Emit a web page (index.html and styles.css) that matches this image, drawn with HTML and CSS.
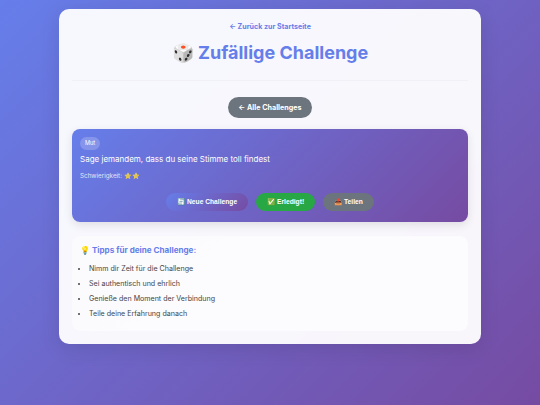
FILE: index.html
```html
<!DOCTYPE html>
<html lang="de">
<head>
<meta charset="utf-8">
<title>Zufällige Challenge</title>
<link rel="stylesheet" href="styles.css">
</head>
<body>
<main class="container">
  <header class="header">
    <a class="back-link" href="#">← Zurück zur Startseite</a>
    <h1 class="title">🎲 Zufällige Challenge</h1>
  </header>
  <div class="all-row"><a class="all-btn" href="#">← Alle Challenges</a></div>
  <section class="card">
    <span class="tag">Mut</span>
    <p class="text">Sage jemandem, dass du seine Stimme toll findest</p>
    <p class="level">Schwierigkeit: ⭐⭐</p>
    <div class="actions">
      <button class="btn btn-new">🔄 Neue Challenge</button>
      <button class="btn btn-done">✅ Erledigt!</button>
      <button class="btn btn-share">📤 Teilen</button>
    </div>
  </section>
  <section class="tips">
    <h3 class="tips-title">💡 Tipps für deine Challenge:</h3>
    <ul class="tips-list">
      <li>Nimm dir Zeit für die Challenge</li>
      <li>Sei authentisch und ehrlich</li>
      <li>Genieße den Moment der Verbindung</li>
      <li>Teile deine Erfahrung danach</li>
    </ul>
  </section>
</main>
</body>
</html>
```
FILE: styles.css
```css
* { box-sizing: border-box; }
html, body { margin: 0; height: 405px; overflow: hidden; }
body {
  padding: 9px 59px 0;
  background: linear-gradient(135deg, #667eea 0%, #764ba2 100%);
  font-family: Inter, "Noto Sans", sans-serif;
  color: #333;
}
.container {
  height: 335px;
  padding: 13px;
  border-radius: 10px;
  background: rgba(255, 255, 255, 0.95);
  box-shadow: 0 5px 20px rgba(0, 0, 0, 0.1);
}
.header {
  height: 59px;
  border-bottom: 1px solid #f0f0f6;
  text-align: center;
}
.back-link {
  display: block;
  font-size: 7.1px;
  line-height: 10px;
  font-weight: 700;
  color: #667eea;
  text-decoration: none;
}
.title {
  margin: 8px 0 0;
  font-size: 18px;
  line-height: 26px;
  font-weight: 700;
  color: #667eea;
}
.all-row { display: flex; justify-content: center; margin-top: 16px; }
.all-btn {
  display: block;
  padding: 0 10.5px;
  height: 21px;
  line-height: 21px;
  border-radius: 11px;
  background: #6c757d;
  color: #fff;
  font-size: 7.2px;
  font-weight: 700;
  text-decoration: none;
}
.card {
  margin-top: 11px;
  height: 93px;
  padding: 8px;
  border-radius: 8px;
  background: linear-gradient(135deg, #667eea 0%, #764ba2 100%);
  box-shadow: 0 3px 10px rgba(0, 0, 0, 0.1);
  color: #fff;
}
.tag {
  display: block;
  width: fit-content;
  padding: 0 5px;
  height: 13px;
  line-height: 13px;
  border-radius: 7px;
  background: rgba(255, 255, 255, 0.2);
  font-size: 5.6px;
}
.text { margin: 3px 0 0; font-size: 8px; line-height: 13px; }
.level { margin: 5px 0 0; font-size: 6.3px; line-height: 11px; opacity: 0.8; }
.actions { display: flex; justify-content: center; gap: 8px; margin-top: 11px; }
.btn {
  height: 18px;
  padding: 0 11px;
  border: 0;
  border-radius: 9px;
  color: #fff;
  font-family: "Liberation Sans", Arial, sans-serif;
  font-size: 6.7px;
  font-weight: 700;
}
.btn-new { background: linear-gradient(135deg, #667eea 0%, #764ba2 100%); }
.btn-done { background: #28a745; }
.btn-share { background: #6c757d; }
.tips {
  margin-top: 14px;
  height: 95px;
  padding: 8px;
  border-radius: 8px;
  background: rgba(255, 255, 255, 0.5);
}
.tips-title {
  margin: 0;
  font-size: 8.1px;
  line-height: 13px;
  font-weight: 700;
  color: #667eea;
}
.tips-list {
  margin: 4px 0 0;
  padding: 0 0 0 9px;
  font-size: 7.1px;
  line-height: 15px;
  color: #444;
}
```
